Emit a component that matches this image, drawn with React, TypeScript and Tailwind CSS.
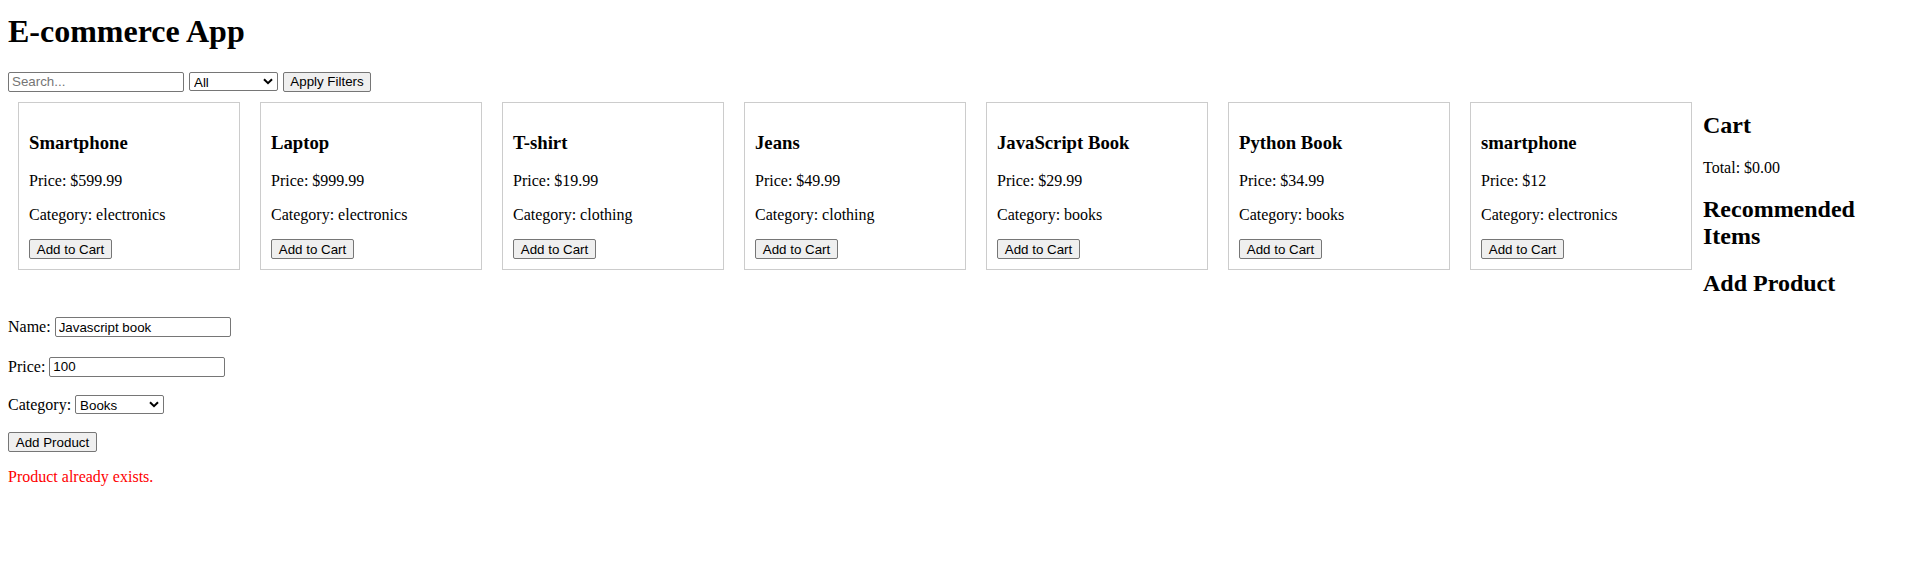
import React from 'react';

type Product = { id: number; name: string; price: string; category: string };

const products: Product[] = [
  { id: 1, name: 'Smartphone', price: '599.99', category: 'electronics' },
  { id: 2, name: 'Laptop', price: '999.99', category: 'electronics' },
  { id: 3, name: 'T-shirt', price: '19.99', category: 'clothing' },
  { id: 4, name: 'Jeans', price: '49.99', category: 'clothing' },
  { id: 5, name: 'JavaScript Book', price: '29.99', category: 'books' },
  { id: 6, name: 'Python Book', price: '34.99', category: 'books' },
  { id: 7, name: 'smartphone', price: '12', category: 'electronics' },
];

const control = "font-['Liberation_Sans',Arial,sans-serif] text-[13.33px] text-black";
const btn = `${control} h-[20px] border border-[#767676] rounded-[2px] bg-[#efefef] text-center leading-none`;
const textInput = `${control} h-[20px] w-[176px] border border-[#767676] rounded-[2px] bg-white pl-[3px] outline-none placeholder:text-[#757575]`;

function Select({ value, options, width }: { value: string; options: string[]; width: string }) {
  return (
    <span className={`relative inline-flex ${width}`}>
      <select
        defaultValue={value}
        className={`${control} h-[19px] w-full appearance-none border border-[#767676] rounded-[2px] bg-white pl-[4px] outline-none`}
      >
        {options.map((o) => (
          <option key={o}>{o}</option>
        ))}
      </select>
      {/* dropdown chevron */}
      <svg
        className="pointer-events-none absolute right-[5px] top-[6px]"
        width="10"
        height="7"
        viewBox="0 0 10 7"
        fill="none"
      >
        <path d="M1 1.2 L5 5.2 L9 1.2" stroke="#000" strokeWidth="2" />
      </svg>
    </span>
  );
}

function ProductCard({ product }: { product: Product }) {
  return (
    <div className="m-[10px] w-[222px] border border-[#cccccc] p-[10px]">
      <h3 className="my-[18.72px] text-[18.72px] font-bold leading-[21.5px]">{product.name}</h3>
      <p className="my-4 leading-[17.7px]">Price: ${product.price}</p>
      <p className="my-4 leading-[17.7px]">Category: {product.category}</p>
      <button className={`${btn} block w-[83px]`}>Add to Cart</button>
    </div>
  );
}

export default function App() {
  return (
    <div className="min-h-screen bg-white px-2 pt-[13px] text-[16px] text-black font-['Liberation_Serif','Times_New_Roman',serif]">
      <h1 className="mb-[22px] text-[32px] font-bold leading-[36px]">E-commerce App</h1>

      {/* Filters */}
      <div className="flex h-[21px] items-center">
        <input type="text" placeholder="Search..." className={textInput} />
        <span className="ml-[5px]">
          <Select value="All" options={['All', 'Electronics', 'Clothing', 'Books']} width="w-[89px]" />
        </span>
        <button className={`${btn} ml-[5px] w-[88px]`}>Apply Filters</button>
      </div>

      <div className="flex items-start">
        {/* Product list */}
        <div className="flex w-[1695px] shrink-0 flex-wrap items-start">
          {products.map((p) => (
            <ProductCard key={p.id} product={p} />
          ))}
        </div>

        {/* Sidebar */}
        <div className="min-w-0 flex-1">
          <h2 className="my-[19.92px] text-[24px] font-bold leading-[27px]">Cart</h2>
          <p className="my-4 leading-[17.7px]">Total: $0.00</p>
          <h2 className="my-[19.92px] text-[24px] font-bold leading-[27px]">Recommended Items</h2>
          <h2 className="my-[19.92px] text-[24px] font-bold leading-[27px]">Add Product</h2>
        </div>
      </div>

      {/* Add product form */}
      <form onSubmit={(e) => e.preventDefault()}>
        <div className="flex h-[20px] items-center">
          <span className="leading-[17.7px]">Name:</span>
          <input type="text" defaultValue="Javascript book" className={`${textInput} ml-[4px]`} />
        </div>
        <div className="mt-[19.4px] flex h-[20px] items-center">
          <span className="leading-[17.7px]">Price:</span>
          <input type="text" defaultValue="100" className={`${textInput} ml-[4px]`} />
        </div>
        <div className="mt-[18px] flex h-[20px] items-center">
          <span className="leading-[17.7px]">Category:</span>
          <span className="ml-[4px]">
            <Select value="Books" options={['Electronics', 'Clothing', 'Books']} width="w-[89px]" />
          </span>
        </div>
        <div className="mt-[17.6px] flex h-[20.4px] items-center">
          <button type="submit" className={`${btn} h-[20.4px] w-[89px]`}>Add Product</button>
        </div>
        <p className="mt-[15.8px] leading-[17.7px] text-[red]">Product already exists.</p>
      </form>
    </div>
  );
}
